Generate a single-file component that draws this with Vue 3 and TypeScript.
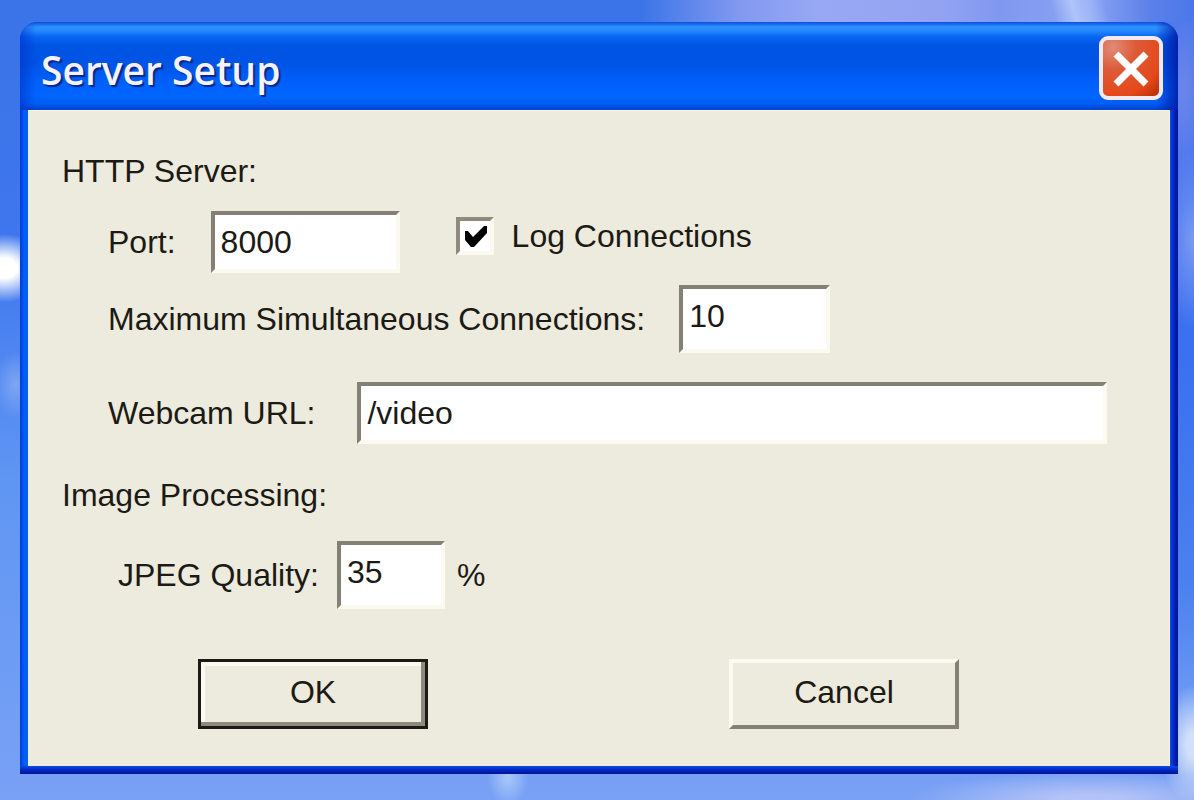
<script setup lang="ts">
import { ref } from 'vue'

const port = ref('8000')
const logConnections = ref(true)
const maxConnections = ref('10')
const webcamUrl = ref('/video')
const jpegQuality = ref('35')
</script>

<template>
  <main class="desktop">
    <section class="window" role="dialog" aria-labelledby="window-title">
      <header class="titlebar">
        <h1 id="window-title">Server Setup</h1>
        <button class="close" type="button" aria-label="Close">
          <svg viewBox="0 0 64 64" aria-hidden="true">
            <defs>
              <radialGradient id="close-face" cx="0.2" cy="0.15" r="1.1">
                <stop offset="0" stop-color="#e28a78" />
                <stop offset="0.35" stop-color="#dd5a38" />
                <stop offset="0.75" stop-color="#e5481a" />
                <stop offset="1" stop-color="#b92c05" />
              </radialGradient>
            </defs>
            <rect x="2" y="2" width="60" height="60" rx="7" fill="url(#close-face)" stroke="#f3e9f2" stroke-width="4" />
            <path d="M17 18 L47 48 M47 18 L17 48" stroke="#fff" stroke-width="7" fill="none" />
          </svg>
        </button>
      </header>

      <form class="client" @submit.prevent>
        <h2>HTTP Server:</h2>
        <div class="row port-row">
          <label for="port">Port:</label>
          <input id="port" v-model="port" class="field port" type="text" />
          <div class="check">
            <input id="log" v-model="logConnections" type="checkbox" />
            <svg class="tick" viewBox="0 0 38 38" aria-hidden="true">
              <path d="M9 14 H12 L17 20 L28 9 H31 V16 L18 30 H15 L9 23 Z" fill="#000" />
            </svg>
            <label for="log">Log Connections</label>
          </div>
        </div>
        <div class="row max-row">
          <label for="max">Maximum Simultaneous Connections:</label>
          <input id="max" v-model="maxConnections" class="field tall max" type="text" />
        </div>
        <div class="row url-row">
          <label for="url">Webcam URL:</label>
          <input id="url" v-model="webcamUrl" class="field url" type="text" />
        </div>
        <h2>Image Processing:</h2>
        <div class="row quality-row">
          <label for="quality">JPEG Quality:</label>
          <input id="quality" v-model="jpegQuality" class="field tall quality" type="text" />
          <span>%</span>
        </div>
        <div class="actions">
          <button class="push default" type="submit">OK</button>
          <button class="push" type="button">Cancel</button>
        </div>
      </form>
    </section>
  </main>
</template>

<style>
html,
body {
  margin: 0;
}
</style>

<style scoped>
* {
  box-sizing: border-box;
}

.desktop {
  display: flex;
  min-height: 100vh;
  padding: 22px 16px 26px 20px;
  font-family: "Liberation Sans", Arial, sans-serif;
  font-size: 32px;
  line-height: 40px;
  color: #1c1a14;
  background:
    radial-gradient(ellipse 44px 34px at 4px 268px, #fff 30%, rgba(255, 255, 255, 0) 100%),
    radial-gradient(ellipse 22px 34px at 16px 385px, #7fa6f4, rgba(127, 166, 244, 0)),
    radial-gradient(ellipse 34px 60px at 100% 745px, #d3e0f9 20%, rgba(190, 210, 250, 0)),
    radial-gradient(ellipse 180px 28px at 1090px 100%, #b3c2f7 20%, rgba(160, 184, 246, 0)),
    radial-gradient(ellipse 20px 28px at 508px 778px, #a3c5f8 10%, rgba(163, 197, 248, 0)),
    linear-gradient(75deg, rgba(180, 202, 252, 0) 1020px, #aec4fb 1040px, rgba(180, 202, 252, 0) 1072px) top / 100% 22px no-repeat,
    linear-gradient(90deg, rgba(148, 164, 242, 0) 640px, #8299f0 740px, #98a8f4 820px, #93a3f2 940px, #8098f0 1000px, #8ca4f3 1090px, #5c80ea 1150px, #4a78ea 100%) top / 100% 22px no-repeat,
    radial-gradient(ellipse 34px 90px at 100% 240px, #7c9af2, rgba(124, 154, 242, 0)),
    radial-gradient(ellipse 34px 120px at 1184px 90px, #6c86ea, rgba(108, 134, 234, 0)),
    linear-gradient(#3f70ec, #3b70f0 50%, #4a80ee 80%, rgba(90, 140, 242, 0)) right top / 16px 720px no-repeat,
    linear-gradient(#3a74e8 0, #3f76ee 30%, #5f96f3 60%, #79a1f5 100%);
}

.window {
  display: flex;
  flex: 1;
  flex-direction: column;
  padding: 0 8px 8px;
  border-radius: 18px 18px 0 0;
  background:
    linear-gradient(#0a4be6, #0226c4 50%, #001396) bottom / 100% 8px no-repeat,
    linear-gradient(90deg, #0038d8, #0060f4 50%, #0a5cf0) left / 8px 100% no-repeat,
    linear-gradient(90deg, #0a4be6, #0226c0 50%, #001090) right / 8px 100% no-repeat,
    #0050e8;
}

.titlebar {
  display: flex;
  align-items: center;
  justify-content: space-between;
  height: 88px;
  margin: 0 -8px;
  padding: 4px 15px 0 21px;
  border-radius: 18px 18px 0 0;
  background:
    linear-gradient(90deg, rgba(0, 50, 200, 0.6), rgba(0, 50, 200, 0) 16px, rgba(0, 30, 180, 0) calc(100% - 22px), rgba(0, 20, 160, 0.8)),
    linear-gradient(#0a4fdc 0, #2f92ff 5px, #2487fd 9px, #0764f2 15px, #0054e3 24px, #0054e6 42px, #0060fa 60px, #0066ff 74px, #005cf0 82px, #0042d0 88px);
}

h1 {
  margin: 0;
  padding-top: 4px;
  font-family: "Open Sans", "Noto Sans", sans-serif;
  font-size: 39px;
  font-weight: 600;
  line-height: 48px;
  color: #f6f2fa;
  text-shadow: 2px 2px 1px #06288c;
}

.close {
  width: 64px;
  height: 64px;
  padding: 0;
  border: 0;
  background: none;
}

.close svg {
  display: block;
}

.client {
  flex: 1;
  padding: 40px 62px 36px 34px;
  border: 1px solid #f8f5e0;
  border-width: 1px 1px 0 0;
  background: #edeade;
}

h2 {
  margin: 0;
  font-size: 32px;
  font-weight: 400;
  line-height: 40px;
}

.row {
  display: flex;
  align-items: center;
  padding-left: 46px;
}

.port-row {
  gap: 35px;
  margin-top: 20px;
}

.max-row {
  gap: 34px;
  margin-top: 12px;
}

.url-row {
  gap: 42px;
  margin: 29px 0 31px;
}

.quality-row {
  gap: 18px;
  margin-top: 26px;
  padding-left: 56px;
}

.field {
  height: 62px;
  padding: 7px 6px;
  border: 4px solid;
  border-color: #858074 #fbfaf0 #fbfaf0 #858074;
  border-radius: 0;
  outline: 0;
  background: #fff;
  font: inherit;
  color: inherit;
}

.tall {
  height: 68px;
  padding-bottom: 13px;
}

.port {
  width: 189px;
}

.max {
  width: 151px;
}

.url {
  flex: 1;
  min-width: 0;
}

.quality {
  width: 108px;
}

.quality-row span {
  margin-left: -6px;
}

.check {
  display: grid;
  grid-template-columns: 38px auto;
  column-gap: 18px;
  align-items: center;
  align-self: flex-start;
  height: 50px;
  margin-left: 21px;
}

.check input {
  grid-area: 1 / 1;
  width: 38px;
  height: 38px;
  margin: 0;
  border: 4px solid;
  border-color: #8f8a7e #fbfaf0 #fbfaf0 #8f8a7e;
  appearance: none;
  background: #fff;
}

.tick {
  grid-area: 1 / 1;
  z-index: 1;
  width: 38px;
  height: 38px;
  pointer-events: none;
  visibility: hidden;
}

.check input:checked + .tick {
  visibility: visible;
}

.actions {
  display: flex;
  justify-content: space-between;
  margin-top: 50px;
  padding: 0 148px 0 136px;
}

.push {
  width: 230px;
  height: 70px;
  padding: 0 0 4px;
  border: 4px solid;
  border-color: #fcfaf0 #858074 #858074 #fcfaf0;
  border-radius: 0;
  background: #edeade;
  font: inherit;
  color: inherit;
}

.default {
  border: 3px solid #1c1a14;
  box-shadow: inset -4px -4px #8f8a7e, inset 4px 4px #fcfaf0;
}
</style>
